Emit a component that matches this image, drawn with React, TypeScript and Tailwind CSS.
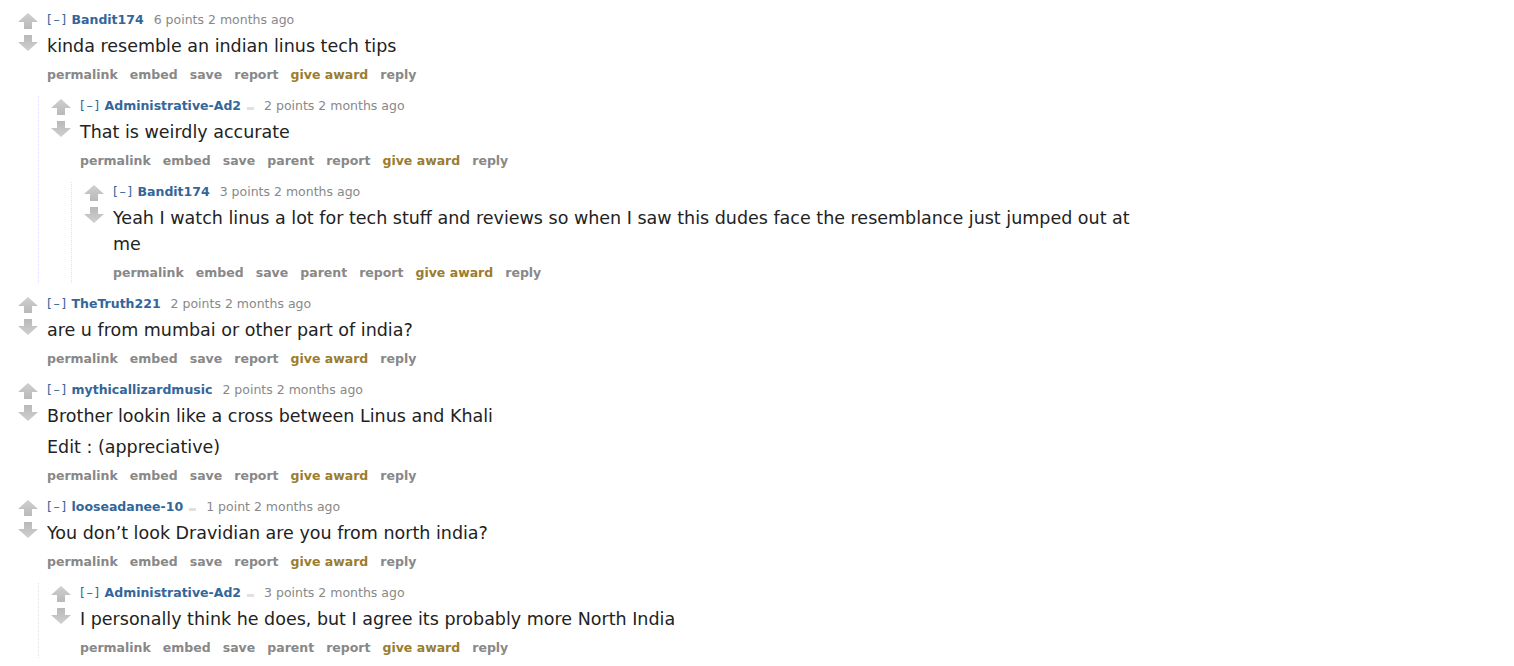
import React from 'react';

type Comment = {
  author: string;
  points: string;
  flair?: boolean;
  body: string[];
  parent?: boolean;
  children?: Comment[];
};

const comments: Comment[] = [
  {
    author: 'Bandit174',
    points: '6 points',
    body: ['kinda resemble an indian linus tech tips'],
    children: [
      {
        author: 'Administrative-Ad2',
        points: '2 points',
        flair: true,
        parent: true,
        body: ['That is weirdly accurate'],
        children: [
          {
            author: 'Bandit174',
            points: '3 points',
            parent: true,
            body: [
              'Yeah I watch linus a lot for tech stuff and reviews so when I saw this dudes face the resemblance just jumped out at me',
            ],
          },
        ],
      },
    ],
  },
  {
    author: 'TheTruth221',
    points: '2 points',
    body: ['are u from mumbai or other part of india?'],
  },
  {
    author: 'mythicallizardmusic',
    points: '2 points',
    body: ['Brother lookin like a cross between Linus and Khali', 'Edit : (appreciative)'],
  },
  {
    author: 'looseadanee-10',
    points: '1 point',
    flair: true,
    body: ['You don\u2019t look Dravidian are you from north india?'],
    children: [
      {
        author: 'Administrative-Ad2',
        points: '3 points',
        flair: true,
        parent: true,
        body: ['I personally think he does, but I agree its probably more North India'],
      },
    ],
  },
];

// vote arrow, drawn pointing up; flipped for the down arrow
function Arrow({ down }: { down?: boolean }) {
  return (
    <svg
      width="20"
      height="16"
      viewBox="0 0 20 16"
      className={down ? 'rotate-180' : ''}
    >
      <defs>
        <linearGradient id={down ? 'ad' : 'au'} x1="0" y1="0" x2="0" y2="1">
          <stop offset="0" stopColor="#cfcfcf" />
          <stop offset="1" stopColor="#b9b9b9" />
        </linearGradient>
      </defs>
      <path d="M10 0 L20 9 L14 9 L14 16 L6 16 L6 9 L0 9 Z" fill={`url(#${down ? 'ad' : 'au'})`} />
    </svg>
  );
}

function CommentEntry({ c }: { c: Comment }) {
  const buttons = ['permalink', 'embed', 'save', ...(c.parent ? ['parent'] : []), 'report'];

  return (
    <div>
      <div className="flex">
        <div className="flex w-5 shrink-0 flex-col items-center gap-[6px] pt-[3px]">
          <Arrow />
          <Arrow down />
        </div>
        <div className="ml-[9px] min-w-0">
          <div className="flex items-center text-[12.5px] leading-[20px] text-[#888]">
            <span className="tracking-[1.5px] text-[#369]">[–]</span>
            <span className="ml-[4px] font-bold text-[#369]">{c.author}</span>
            {c.flair && <span className="ml-[6px] mt-[5px] h-[3px] w-[7px] bg-[#e0e0e0]" />}
            <span className="ml-[10px]">{c.points} 2 months ago</span>
          </div>
          <div className="mt-[3px] max-w-[1040px] text-[17.5px] leading-[26px] text-[#222]">
            {c.body.map((p, i) => (
              <p key={i} className={i > 0 ? 'mt-[5px]' : ''}>
                {p}
              </p>
            ))}
          </div>
          <div className="mt-[6px] flex gap-[12px] text-[12.5px] font-bold leading-[20px] text-[#888]">
            {buttons.map((b) => (
              <span key={b}>{b}</span>
            ))}
            <span className="text-[#9a7d2e]">give award</span>
            <span>reply</span>
          </div>
        </div>
      </div>
      {c.children && (
        <div className="ml-5 mt-[11px] border-l border-dotted border-[#ddf] pl-3">
          {c.children.map((ch, i) => (
            <div key={i} className={i > 0 ? 'mt-[11px]' : ''}>
              <CommentEntry c={ch} />
            </div>
          ))}
        </div>
      )}
    </div>
  );
}

export default function App() {
  return (
    <div className="bg-white pl-[18px] pt-[10px] font-['DejaVu_Sans',Verdana,sans-serif]">
      <div className="flex flex-col gap-[11px]">
        {comments.map((c, i) => (
          <CommentEntry key={i} c={c} />
        ))}
      </div>
    </div>
  );
}
